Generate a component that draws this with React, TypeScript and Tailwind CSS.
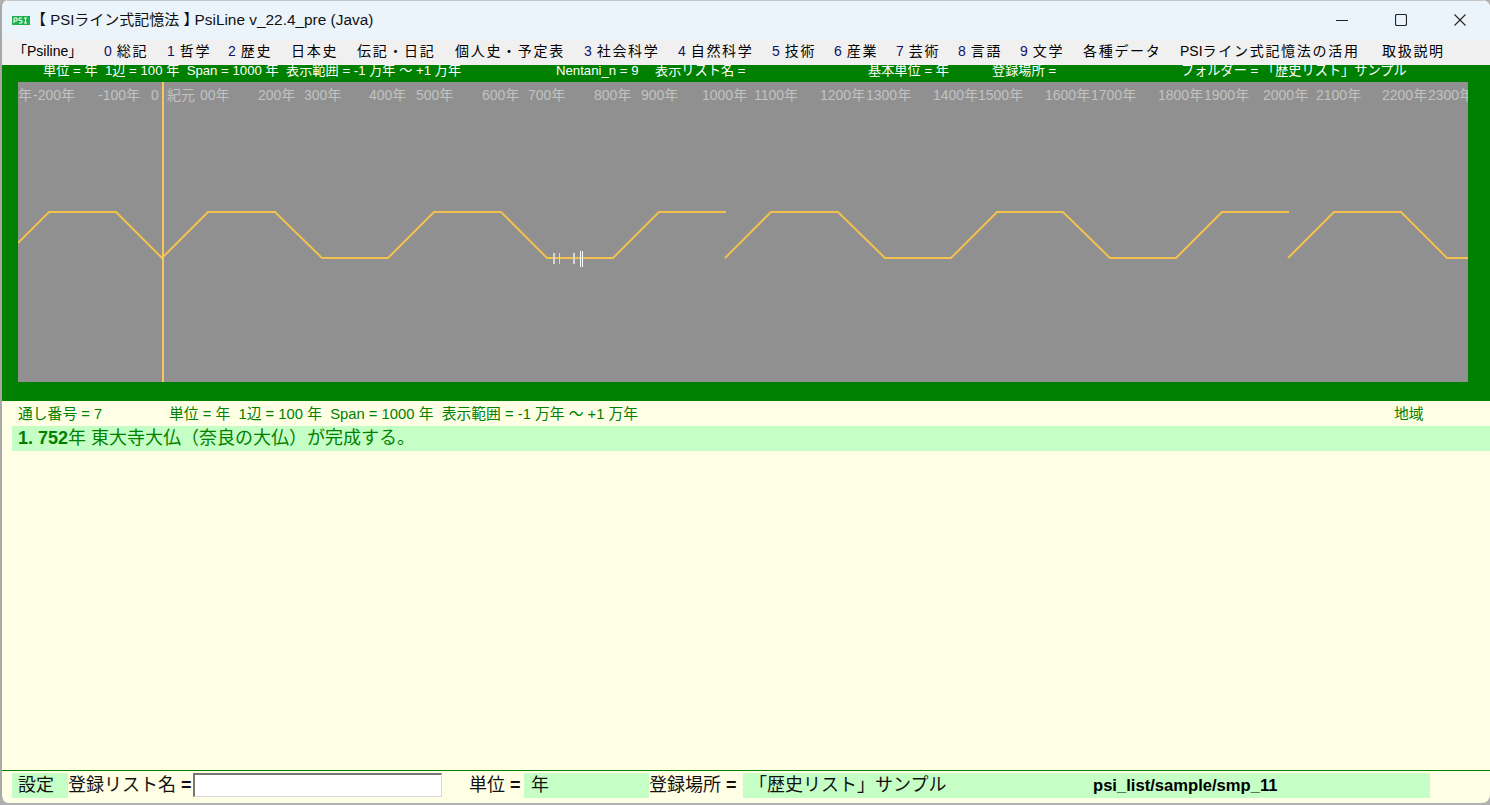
const JP = "font-['Liberation_Sans','Noto_Sans_CJK_JP',sans-serif]";

const menu: [string, string, number][] = [
  ["", "「Psiline」", 13],
  ["0", "総記", 104],
  ["1", "哲学", 167],
  ["2", "歴史", 228],
  ["", "日本史", 291],
  ["", "伝記・日記", 357],
  ["", "個人史・予定表", 455],
  ["3", "社会科学", 584],
  ["4", "自然科学", 678],
  ["5", "技術", 772],
  ["6", "産業", 834],
  ["7", "芸術", 896],
  ["8", "言語", 958],
  ["9", "文学", 1020],
  ["", "各種データ", 1083],
  ["", "PSIライン式記憶法の活用", 1180],
  ["", "取扱説明", 1382],
];

const ticks: [string, number][] = [
  ["年", 0], ["-200年", 15], ["-100年", 80], ["0", 133], ["紀元", 149], ["00年", 182], ["200年", 240], ["300年", 286],
  ["400年", 351], ["500年", 398], ["600年", 464], ["700年", 510], ["800年", 576], ["900年", 623],
  ["1000年", 684], ["1100年", 736], ["1200年", 802], ["1300年", 848], ["1400年", 915], ["1500年", 960],
  ["1600年", 1027], ["1700年", 1073], ["1800年", 1140], ["1900年", 1186], ["2000年", 1245], ["2100年", 1298],
  ["2200年", 1364], ["2300年", 1410],
];

const topInfo: [string, number][] = [
  ["単位 = 年  1辺 = 100 年  Span = 1000 年  表示範囲 = -1 万年 ～ +1 万年", 25],
  ["Nentani_n = 9", 538],
  ["表示リスト名 =", 637],
  ["基本単位 = 年", 850],
  ["登録場所 =", 974],
  ["フォルダー = 「歴史リスト」サンプル", 1163],
];

function Ctl({ w, children }: { w: string; children: React.ReactNode }) {
  return <div className={`${w} flex items-center justify-center`}>{children}</div>;
}

export default function App() {
  return (
    <div className={`${JP} w-[1490px] h-[805px] bg-[#b0b0b0] overflow-hidden`}>
      <div className="w-[1490px] h-[803px] border-l-2 border-[#a8a8a8] bg-[#ffffe6] rounded-[8px] overflow-hidden flex flex-col">
        {/* title bar */}
        <div className="h-[39px] pl-[10px] flex items-center bg-[#ebf4fb] border-t border-[#c4c4c4] shrink-0">
          <svg width="18" height="9" viewBox="0 0 18 9" className="shrink-0">
            <rect width="18" height="9" fill="#1fb14f" />
            <path d="M2 7V2h3v3H2M10 2H7v2.500h3V7H7M12 2h3M13.500 2v5M12 7h3" fill="none" stroke="#fff" strokeWidth="1" />
          </svg>
          <div className="ml-[1px] text-[15px] text-[#111] whitespace-nowrap">
            【 PSIライン式記憶法 】<span className="-ml-[4px] text-[15.4px]">PsiLine v_22.4_pre (Java)</span>
          </div>
          <div className="ml-auto flex h-full items-center">
            <Ctl w="w-[58px]">
              <svg width="12" height="12" viewBox="0 0 12 12"><path d="M0 6.500h12" stroke="#222" strokeWidth="1" /></svg>
            </Ctl>
            <Ctl w="w-[59px]">
              <svg width="12" height="12" viewBox="0 0 12 12"><rect x="0.500" y="0.500" width="11" height="11" rx="1.500" fill="none" stroke="#222" strokeWidth="1.200" /></svg>
            </Ctl>
            <Ctl w="w-[60px]">
              <svg width="12" height="12" viewBox="0 0 12 12"><path d="M0.500 0.500l11 11M11.500 0.500l-11 11" stroke="#222" strokeWidth="1.100" /></svg>
            </Ctl>
          </div>
        </div>

        {/* menu */}
        <div className="relative h-[26px] bg-[#f0f0f0] shrink-0 text-[14px] text-black">
          {menu.map(([n, t, x]) => (
            <span key={t} className="absolute top-[2px] whitespace-nowrap tracking-[1.7px]" style={{ left: x - 2 }}>
              {n && <span className="text-[#10106a] mr-[1px] tracking-normal">{n} </span>}
              {t.startsWith("PSI") ? <><span className="tracking-normal">PSI</span>{t.slice(3)}</> : t === "「Psiline」" ? <span className="tracking-normal">{t}</span> : t}
            </span>
          ))}
        </div>

        {/* green panel */}
        <div className="h-[336px] bg-[#008000] shrink-0 flex flex-col pl-[16px] pr-[22px]">
          <div className="h-[17px] shrink-0 relative text-[13.2px] text-white">
            {topInfo.map(([t, x]) => (
              <span key={t} className="absolute top-[-1px] leading-[14px] whitespace-pre" style={{ left: x }}>{t}</span>
            ))}
          </div>
          <div className="relative w-[1450px] h-[300px] bg-[#909090] overflow-hidden shrink-0">
            {ticks.map(([t, x]) => (
              <span key={t} className="absolute top-[4px] text-[14px] leading-[18px] text-[#c2c2c2] whitespace-nowrap" style={{ left: x }}>{t}</span>
            ))}
            <svg width="1450" height="300" viewBox="18 82 1450 300" className="absolute left-0 top-0">
              <g fill="none" stroke="#f2c14e" strokeWidth="2">
                <polyline points="18,243 49,212 116,212 162,258 208,212 275,212 322,258 388,258 434,212 501,212 547,258 613,258 659,212 726,212" />
                <polyline points="725,258 771,212 838,212 885,258 951,258 997,212 1063,212 1110,258 1176,258 1222,212 1289,212" />
                <polyline points="1288,258 1334,212 1401,212 1447,258 1468,258" />
                <path d="M163 82V382" stroke="#f5c662" />
              </g>
              <g>
                <rect x="553" y="253" width="2" height="11" fill="#d6d6d6" />
                <rect x="559" y="253" width="1" height="11" fill="#d6d6d6" />
                <rect x="573" y="253" width="2" height="11" fill="#d6d6d6" />
                <rect x="580" y="251" width="1" height="16" fill="#ffffff" />
                <rect x="582" y="251" width="1" height="16" fill="#ffffff" />
              </g>
            </svg>
          </div>
        </div>

        {/* list */}
        <div className="flex-1 min-h-0 flex flex-col pl-[10px] text-[#008000]">
          <div className="h-[25px] relative text-[14.8px] shrink-0">
            <span className="absolute left-[6px] top-[5px] leading-[16px]">通し番号 = 7</span>
            <span className="absolute left-[157px] top-[5px] leading-[16px] whitespace-pre">単位 = 年  1辺 = 100 年  Span = 1000 年  表示範囲 = -1 万年 ～ +1 万年</span>
            <span className="absolute left-[1382px] top-[5px] leading-[16px]">地域</span>
          </div>
          <div className="h-[25px] bg-[#c6ffc6] shrink-0 pl-[6px] flex items-center text-[18px] whitespace-pre">
            <b>1. 752</b>年 東大寺大仏（奈良の大仏）が完成する。
          </div>
          <div className="flex-1" />
        </div>

        {/* bottom bar */}
        <div className="h-[33px] border-t border-[#008000] shrink-0 pt-[2px] pl-[10px] flex items-start text-[18px] text-[#111]">
          <div className="w-[56px] h-[25px] bg-[#c6ffc6] pl-[6px] leading-[25px]">設定</div>
          <div className="w-[125px] h-[25px] leading-[25px] whitespace-pre">登録リスト名 <b>=</b></div>
          <input aria-label="登録リスト名" className="w-[249px] h-[24px] bg-white border border-t-2 border-l-2 border-t-[#767676] border-l-[#767676] border-r-[#d8d8d8] border-b-[#d8d8d8] outline-none" />
          <div className="w-[82px] h-[25px] leading-[25px] pl-[27px] whitespace-pre">単位 <b>=</b></div>
          <div className="w-[125px] h-[25px] bg-[#c6ffc6] pl-[7px] leading-[25px]">年</div>
          <div className="w-[94px] h-[25px] leading-[25px] whitespace-pre">登録場所 <b>=</b></div>
          <div className="w-[687px] h-[25px] bg-[#c6ffc6] flex leading-[25px] whitespace-pre">
            <span className="pl-[6px] w-[350px]">「歴史リスト」サンプル</span>
            <span className="font-bold text-[16.6px] text-black">psi_list/sample/smp_11</span>
          </div>
        </div>
      </div>
    </div>
  );
}
